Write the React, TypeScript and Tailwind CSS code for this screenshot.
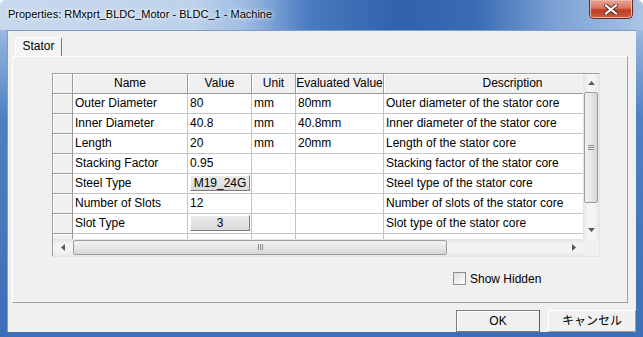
import clsx from "clsx";

type Row = {
  name: string;
  value: string;
  unit?: string;
  evaluated?: string;
  desc: string;
  button?: boolean;
};

const rows: Row[] = [
  { name: "Outer Diameter", value: "80", unit: "mm", evaluated: "80mm", desc: "Outer diameter of the stator core" },
  { name: "Inner Diameter", value: "40.8", unit: "mm", evaluated: "40.8mm", desc: "Inner diameter of the stator core" },
  { name: "Length", value: "20", unit: "mm", evaluated: "20mm", desc: "Length of the stator core" },
  { name: "Stacking Factor", value: "0.95", desc: "Stacking factor of the stator core" },
  { name: "Steel Type", value: "M19_24G", button: true, desc: "Steel type of the stator core" },
  { name: "Number of Slots", value: "12", desc: "Number of slots of the stator core" },
  { name: "Slot Type", value: "3", button: true, desc: "Slot type of the stator core" },
  { name: "", value: "", desc: "" },
];

const gridCols = "grid grid-cols-[20px_115px_64px_44px_88px_258px]";
const headCell =
  "flex items-center justify-center border-r border-b border-[#9a9a9a] bg-[#f0f0f0] shadow-[inset_1px_1px_0_#ffffff] whitespace-nowrap";
const bodyCell = "flex items-center border-r border-b border-[#c4c4c4] bg-white pl-[2px] whitespace-nowrap";

function Arrow({ dir }: { dir: "up" | "down" | "left" | "right" }) {
  const pts = {
    up: "0,4 3.5,0 7,4",
    down: "0,0 3.5,4 7,0",
    left: "4,0 0,3.5 4,7",
    right: "0,0 4,3.5 0,7",
  }[dir];
  const vertical = dir === "up" || dir === "down";
  return (
    <svg width={vertical ? 7 : 4} height={vertical ? 4 : 7} viewBox={vertical ? "0 0 7 4" : "0 0 4 7"}>
      <polygon points={pts} fill="#5a5a5a" />
    </svg>
  );
}

function CellButton({ label }: { label: string }) {
  return (
    <div className="flex h-[16px] w-[60px] items-center justify-center border border-t-white border-l-white border-r-[#7a7a7a] border-b-[#7a7a7a] bg-[linear-gradient(180deg,#ececec,#d9d9d9)] text-[12px]">
      {label}
    </div>
  );
}

function PropertyGrid() {
  return (
    <div className="flex h-[184px] w-[548px] flex-col border border-t-[#a0a0a0] border-l-[#a0a0a0] border-r-[#e4e4e4] border-b-[#e4e4e4] bg-[#f0f0f0]">
      <div className="flex h-[165px]">
        <div className="w-[530px] overflow-hidden">
          <div className={clsx(gridCols, "h-[20px] w-[589px]")}>
            <div className={headCell} />
            <div className={headCell}>Name</div>
            <div className={headCell}>Value</div>
            <div className={headCell}>Unit</div>
            <div className={headCell}>Evaluated Value</div>
            <div className={headCell}>Description</div>
          </div>
          {rows.map((r, i) => (
            <div key={i} className={clsx(gridCols, "h-[20px] w-[589px]")}>
              <div className={headCell} />
              <div className={bodyCell}>{r.name}</div>
              <div className={clsx(bodyCell, r.button && "pl-[1px]")}>
                {r.button ? <CellButton label={r.value} /> : r.value}
              </div>
              <div className={bodyCell}>{r.unit}</div>
              <div className={bodyCell}>{r.evaluated}</div>
              <div className={bodyCell}>{r.desc}</div>
            </div>
          ))}
        </div>
        <div className="flex w-[16px] flex-col bg-[linear-gradient(90deg,#e3e3e3,#f4f4f4_30%,#f4f4f4_70%,#e8e8e8)]">
          <div className="flex h-[18px] items-center justify-center">
            <Arrow dir="up" />
          </div>
          <div className="mx-[1px] flex h-[111px] items-center justify-center rounded-[2px] border border-[#9c9c9c] bg-[linear-gradient(90deg,#f1f1f1,#e6e6e6_50%,#d6d6d6)]">
            <svg width="6" height="5" viewBox="0 0 6 5">
              <path d="M0 0.5h6M0 2.5h6M0 4.5h6" stroke="#8c8c8c" strokeWidth="1" />
            </svg>
          </div>
          <div className="flex-1" />
          <div className="flex h-[18px] items-center justify-center">
            <Arrow dir="down" />
          </div>
        </div>
      </div>
      <div className="flex h-[17px]">
        <div className="flex w-[530px] items-center bg-[linear-gradient(180deg,#e3e3e3,#f4f4f4_30%,#f4f4f4_70%,#e8e8e8)]">
          <div className="flex w-[20px] items-center justify-center">
            <Arrow dir="left" />
          </div>
          <div className="flex h-[15px] w-[374px] items-center justify-center rounded-[2px] border border-[#9c9c9c] bg-[linear-gradient(180deg,#f1f1f1,#e6e6e6_50%,#d6d6d6)]">
            <svg width="5" height="6" viewBox="0 0 5 6">
              <path d="M0.5 0v6M2.5 0v6M4.5 0v6" stroke="#8c8c8c" strokeWidth="1" />
            </svg>
          </div>
          <div className="flex-1" />
          <div className="flex w-[18px] items-center justify-center">
            <Arrow dir="right" />
          </div>
        </div>
        <div className="flex-1 bg-[#f0f0f0]" />
      </div>
    </div>
  );
}

export default function App() {
  return (
    <div className="flex h-[337px] w-[643px] flex-col overflow-hidden rounded-t-[6px] bg-[linear-gradient(180deg,#c3d6ed_0%,#8fb0dc_12%,#4f80c2_35%,#3c6fb6_100%)] font-['Liberation_Sans','Noto_Sans_CJK_JP',sans-serif] text-[12px] text-black">
      <div className="flex h-[30px] justify-between bg-[linear-gradient(90deg,#c8d9ee_0%,#bdd2eb_30%,#9ebce3_38%,#4b7bc0_48%,#2f62ab_62%,#3a6cb3_74%,#7aa0d3_86%,#aac4e5_100%)] pl-[8px] pr-[10px]">
        <div className="flex items-center pb-[1px] text-[11px] [text-shadow:0_0_6px_#ffffff,0_0_3px_#ffffff]">
          Properties: RMxprt_BLDC_Motor - BLDC_1 - Machine
        </div>
        <div className="flex h-[19px] w-[44px] items-center justify-center rounded-b-[5px] border border-t-0 border-[#6b2a20] bg-[linear-gradient(180deg,#e9a596_0%,#d9735f_45%,#bf3b22_55%,#cf5a3f_100%)] shadow-[inset_0_0_0_1px_#f0b8aa]">
          <svg width="14" height="11" viewBox="0 0 14 11">
            <path d="M2 1.5L12 9.5M12 1.5L2 9.5" stroke="#4a2a25" strokeWidth="4" strokeLinecap="square" />
            <path d="M2 1.5L12 9.5M12 1.5L2 9.5" stroke="#ffffff" strokeWidth="2.2" strokeLinecap="square" />
          </svg>
        </div>
      </div>
      <div className="mx-[7px] flex h-[302px] flex-col overflow-hidden border-l border-t border-[#7f9cc4] bg-[#f0f0f0]">
        <div className="flex h-[25px] items-end pl-[7px]">
          <div className="flex h-[19px] w-[47px] items-center justify-center rounded-t-[2px] border border-b-0 border-t-white border-l-white border-r-[#7a7a7a] bg-[#f4f4f4] pb-[1px]">
            Stator
          </div>
        </div>
        <div className="ml-[4px] mr-[8px] flex h-[250px] flex-col border border-t-white border-l-white border-r-[#a0a0a0] border-b-[#a0a0a0] pl-[39px] pt-[16px]">
          <PropertyGrid />
          <div className="mt-[13px] flex items-center pl-[401px]">
            <div className="h-[13px] w-[13px] border border-[#8f8f8f] bg-[linear-gradient(135deg,#dcdcdc,#ffffff)]" />
            <span className="ml-[4px]">Show Hidden</span>
          </div>
        </div>
        <div className="mt-[7px] flex pl-[448px]">
          <div className="flex h-[22px] w-[88px] items-center justify-center border border-[#7c7c7c] border-r-[#5a5a5a] bg-[#f0f0f0] shadow-[inset_1px_1px_0_#ffffff]">
            OK
          </div>
          <div className="ml-[8px] flex h-[22px] w-[88px] shrink-0 items-center justify-center border border-t-white border-l-white border-r-[#a0a0a0] border-b-[#a0a0a0] bg-[#f0f0f0]">
            キャンセル
          </div>
        </div>
      </div>
    </div>
  );
}
